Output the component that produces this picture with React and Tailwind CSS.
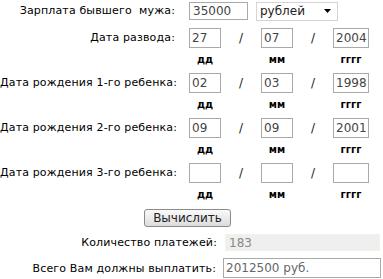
import React from "react";

function Box({ w, children }) {
  return (
    <div
      className={`${w} h-[20px] border border-[#a9a9a9] bg-white flex items-center pl-[2px] text-[12px] leading-none text-[#444] overflow-hidden`}
    >
      {children}
    </div>
  );
}

function DateRow({ label, d, m, y }) {
  return (
    <>
      <div className="flex items-center h-[20px]">
        <div className="w-[175px] text-right text-[11px] tracking-[0.15px] text-black whitespace-nowrap leading-none -mt-[2px]">
          {label}
        </div>
        <div className="ml-[14px] flex items-center">
          <Box w="w-[32px]">{d}</Box>
          <span className="w-[40px] text-center text-[12px] text-[#222]">/</span>
          <Box w="w-[32px]">{m}</Box>
          <span className="w-[40px] text-center text-[12px] text-[#222]">/</span>
          <Box w="w-[36px]">{y}</Box>
        </div>
      </div>
      <div className="flex h-[25px] pl-[189px] pt-[6px] text-[10px] font-bold leading-[12px] text-black">
        <span className="w-[32px] text-center">дд</span>
        <span className="w-[40px]" />
        <span className="w-[32px] text-center">мм</span>
        <span className="w-[40px]" />
        <span className="w-[36px] text-center">гггг</span>
      </div>
    </>
  );
}

export default function App() {
  return (
    <div className="w-[383px] h-[279px] bg-white overflow-hidden font-['DejaVu_Sans',Verdana,sans-serif]">
      <div className="flex items-center h-[20px] mt-[1px]">
        <div className="w-[175px] text-right text-[11px] tracking-[0.15px] text-black whitespace-pre leading-none -mt-[2px]">
          {"Зарплата бывшего  мужа:"}
        </div>
        <div className="ml-[14px] flex items-center">
          <div className="w-[59px] h-[18px] border border-[#a9a9a9] flex items-center pl-[3px] text-[12px] leading-none text-[#444]">
            35000
          </div>
          <div className="ml-[8px] w-[82px] h-[19px] border border-[#d4d4d4] flex items-center justify-between pl-[3px] pr-[6px] text-[12px] leading-none text-[#222]">
            <span>рублей</span>
            <svg width="7" height="4" viewBox="0 0 7 4">
              <path d="M0 0 H7 L3.5 4 Z" fill="#000" />
            </svg>
          </div>
        </div>
      </div>
      <div className="mt-[7px]">
        <DateRow label="Дата развода:" d="27" m="07" y="2004" />
        <DateRow label="Дата рождения 1-го ребенка:" d="02" m="03" y="1998" />
        <DateRow label="Дата рождения 2-го ребенка:" d="09" m="09" y="2001" />
        <DateRow label="Дата рождения 3-го ребенка:" d="" m="" y="" />
      </div>
      <div className="mt-[1px] pl-[144px]">
        <button className="w-[87px] h-[18px] border border-[#8a8a8a] rounded-[3px] bg-gradient-to-b from-[#fafafa] to-[#dcdcdc] text-[12px] leading-none text-[#222] flex items-center justify-center">
          Вычислить
        </button>
      </div>
      <div className="flex items-center mt-[7px] h-[17px]">
        <div className="w-[217px] text-right text-[11px] tracking-[0.15px] text-black leading-none">
          Количество платежей:
        </div>
        <div className="ml-[8px] w-[155px] h-[17px] bg-[#efefef] border border-[#f3f3e6] flex items-center pl-[3px] text-[12px] leading-none text-[#888]">
          183
        </div>
      </div>
      <div className="flex items-center mt-[7px] h-[20px]">
        <div className="w-[216px] text-right text-[11px] tracking-[0.15px] text-black leading-none">
          Всего Вам должны выплатить:
        </div>
        <div className="ml-[7px] w-[158px] h-[20px] border border-[#a9a9a9] flex items-center pl-[2px] text-[12px] leading-none text-[#666]">
          2012500 руб.
        </div>
      </div>
    </div>
  );
}
